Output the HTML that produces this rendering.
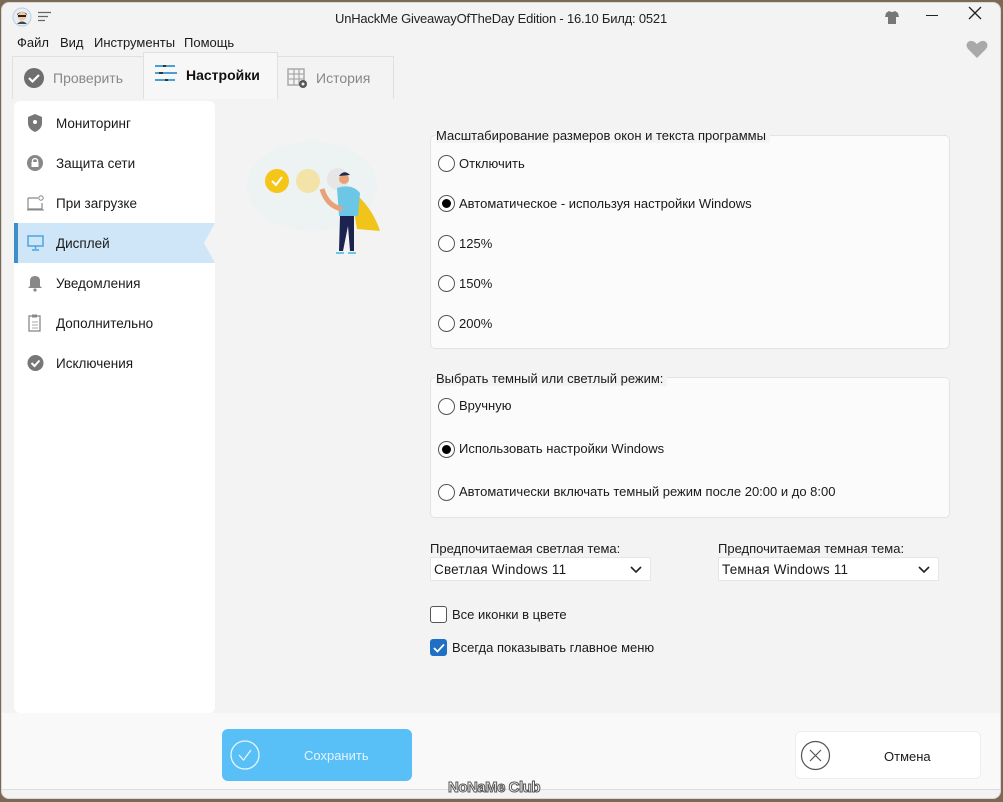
<!DOCTYPE html>
<html><head><meta charset="utf-8"><style>
*{box-sizing:border-box;margin:0;padding:0}
body{width:1003px;height:802px;background:#7a6a55;font-family:"Liberation Sans","Noto Sans CJK SC",sans-serif;font-size:13px;color:#1a1a1a;position:relative;overflow:hidden}
.win{position:absolute;left:1px;top:2px;width:1000px;height:797px;background:#f3f3f3;border-radius:8px;border:1px solid #d8d8d8}
.abs{position:absolute}
.title{left:0;right:0;top:8px;text-align:center;font-size:13px;letter-spacing:-0.2px;color:#222}
.menu span{position:absolute;top:32px;font-size:13px}
.tab{position:absolute;top:53px;height:43px;border:1px solid #e0e0e0;border-bottom:none;background:#f3f3f3;font-size:14px;color:#888}
.sidebar{left:12px;top:98px;width:201px;height:612px;background:#fff;border-radius:6px}
.item{position:absolute;left:0;width:201px;height:40px;font-size:13.5px}
.item .t{position:absolute;left:42px;top:13px}
.item svg{position:absolute;left:13px;top:11px}
.grp{position:absolute;background:#fbfbfb;border:1px solid #e3e3e3;border-radius:5px}
.leg{position:absolute;background:#f3f3f3;padding-right:4px;font-size:13px}
.r{position:absolute;width:17px;height:17px;border:1px solid #555;border-radius:50%;background:#fff}
.r.on::after{content:"";position:absolute;left:3px;top:3px;width:9px;height:9px;border-radius:50%;background:#000}
.rl{position:absolute;font-size:13px}
.dd{position:absolute;height:24px;background:#fff;border:1px solid #e6e6e6;font-size:13.5px;padding:4px 0 0 3px;letter-spacing:.2px}
.cb{position:absolute;width:17px;height:17px;border:1px solid #555;border-radius:3px;background:#fff}
</style></head><body>
<div class="win">
  <svg class="abs" style="left:10px;top:4px" width="20" height="20"><circle cx="10" cy="10" r="9" fill="#e8eef3" stroke="#b9cfe0"/><circle cx="10" cy="9" r="4.5" fill="#f2c9a8"/><path d="M5 8 Q10 2 15 8 L15 7 Q10 3 5 7Z" fill="#222"/><rect x="6" y="8" width="8" height="2" fill="#222"/><path d="M5 17 Q10 12 15 17" fill="#444"/></svg>
  <svg class="abs" style="left:36px;top:8px" width="14" height="12"><path d="M0 1.5H13M0 5.5H10M0 9.5H7" stroke="#666" stroke-width="1.3"/></svg>
  <div class="abs title">UnHackMe GiveawayOfTheDay Edition - 16.10 Билд: 0521</div>
  <svg class="abs" style="left:883px;top:8px" width="14" height="13"><path d="M4 0 L1 2 L0 6 L3 6 L3 13 L11 13 L11 6 L14 6 L13 2 L10 0 Q7 2 4 0Z" fill="#777"/></svg>
  <div class="abs" style="left:924px;top:12px;width:12px;height:1.3px;background:#222"></div>
  <svg class="abs" style="left:966px;top:3px" width="14" height="14"><path d="M1 1L13 13M13 1L1 13" stroke="#222" stroke-width="1.3"/></svg>
  <svg class="abs" style="left:964px;top:36px" width="22" height="20"><path d="M11 19 L2 10 Q-1 6 2 3 Q6 0 11 5 Q16 0 20 3 Q23 6 20 10Z" fill="#a9a9a9"/></svg>
  <div class="menu"><span style="left:15px">Файл</span><span style="left:58px">Вид</span><span style="left:92px">Инструменты</span><span style="left:182px">Помощь</span></div>

  <div class="tab" style="left:10px;width:132px"><svg class="abs" style="left:10px;top:10px" width="22" height="22"><circle cx="11" cy="11" r="10" fill="#6e6e6e"/><path d="M6 11L9.5 14.5L16 8" stroke="#fff" stroke-width="2.2" fill="none"/></svg><span class="abs" style="left:40px;top:13px">Проверить</span></div>
  <div class="tab" style="left:141px;top:49px;height:47px;width:135px;background:#f7f7f7;color:#111;font-weight:bold;border-bottom:none"><svg class="abs" style="left:11px;top:10px" width="22" height="20"><path d="M0 3H8M11 3H20M0 10H4M8 10H22M0 17H10M13 17H20" stroke="#4a9fd5" stroke-width="2"/><path d="M8 3H11M4 10H8M10 17H13" stroke="#333" stroke-width="2"/></svg><span class="abs" style="left:42px;top:14px">Настройки</span></div>
  <div class="tab" style="left:275px;width:117px"><svg class="abs" style="left:9px;top:11px" width="22" height="22"><rect x="1" y="1" width="16" height="16" fill="none" stroke="#aaa" stroke-width="1.5"/><path d="M1 6H17M1 11H17M7 1V17M12 1V17" stroke="#aaa" stroke-width="1.3"/><circle cx="16" cy="16" r="4" fill="#555"/><circle cx="16" cy="16" r="1.5" fill="#eee"/></svg><span class="abs" style="left:38px;top:13px">История</span></div>

  <div class="abs sidebar">
    <div class="item" style="top:2px"><svg width="16" height="18"><path d="M8 0L15 3V9Q15 15 8 18Q1 15 1 9V3Z" fill="#777"/><circle cx="8" cy="8" r="2" fill="#fff"/></svg><span class="t">Мониторинг</span></div>
    <div class="item" style="top:42px"><svg width="16" height="18"><circle cx="8" cy="9" r="8" fill="#888"/><rect x="4.5" y="8" width="7" height="5" fill="#fff"/><path d="M5.5 8V6Q8 3 10.5 6V8" stroke="#fff" fill="none" stroke-width="1.3"/></svg><span class="t">Защита сети</span></div>
    <div class="item" style="top:82px"><svg width="18" height="18"><path d="M1 4V15H15V9M1 4H11" stroke="#888" fill="none" stroke-width="1.2"/><circle cx="14" cy="4" r="2.2" fill="none" stroke="#888"/><path d="M0 16H17" stroke="#888"/></svg><span class="t">При загрузке</span></div>
    <div class="item" style="top:122px;background:#cfe6f8"><div class="abs" style="left:0;top:0;width:4px;height:40px;background:#3e8fc9"></div><div class="abs" style="right:0;top:0;width:0;height:0;border-top:20px solid transparent;border-bottom:20px solid transparent;border-right:11px solid #f3f3f3"></div><svg width="18" height="18"><rect x="1" y="2" width="15" height="10" fill="none" stroke="#4aa6e0" stroke-width="1.5"/><path d="M8.5 12V15M5 16H12" stroke="#4aa6e0" stroke-width="1.5"/></svg><span class="t">Дисплей</span></div>
    <div class="item" style="top:162px"><svg width="16" height="18"><path d="M3 12V7Q3 2 8 2Q13 2 13 7V12L15 14H1Z" fill="#888"/><circle cx="8" cy="16" r="1.6" fill="#888"/></svg><span class="t">Уведомления</span></div>
    <div class="item" style="top:202px"><svg width="16" height="18"><rect x="2" y="2" width="11" height="15" fill="none" stroke="#888" stroke-width="1.3"/><rect x="5" y="0.5" width="5" height="3" fill="#888"/><path d="M5 8H11M5 11H11M5 14H11" stroke="#aaa"/></svg><span class="t">Дополнительно</span></div>
    <div class="item" style="top:242px"><svg width="18" height="18"><circle cx="8.5" cy="9" r="8" fill="#777"/><path d="M4.5 9L7.5 12L12.5 6.5" stroke="#fff" stroke-width="2" fill="none"/></svg><span class="t">Исключения</span></div>
  </div>

  <svg class="abs" style="left:240px;top:128px" width="150" height="130">
    <ellipse cx="70" cy="55" rx="65" ry="45" fill="#edf2f3"/>
    <circle cx="35" cy="50" r="12" fill="#f5c518"/><path d="M30 50L34 54L40 46" stroke="#fff" stroke-width="2" fill="none"/>
    <circle cx="66" cy="50" r="12" fill="#f3e3a8"/>
    <circle cx="96" cy="48" r="11" fill="#e6e6e6"/>
    <path d="M108 58 Q130 75 138 100 L115 98Z" fill="#f1c419"/>
    <path d="M95 57 Q110 52 118 62 L116 85 L97 85Z" fill="#6cc7e6"/>
    <path d="M80 58 Q85 75 100 78" stroke="#e8a27a" stroke-width="5" fill="none"/>
    <circle cx="102" cy="48" r="5" fill="#e8a27a"/><path d="M97 45 Q102 38 108 44" fill="#1d2b4c"/>
    <path d="M98 85 L97 120 L101 120 L106 95 L108 120 L112 120 L112 85Z" fill="#1d2350"/>
    <path d="M94 122H102M106 122H114" stroke="#6cc7e6" stroke-width="2"/>
  </svg>

  <div class="grp" style="left:428px;top:132px;width:520px;height:214px"></div>
  <div class="leg" style="left:434px;top:125px">Масштабирование размеров окон и текста программы</div>
  <div class="r" style="left:436px;top:152px"></div><div class="rl" style="left:457px;top:153px">Отключить</div>
  <div class="r on" style="left:436px;top:192px"></div><div class="rl" style="left:457px;top:193px">Автоматическое - используя настройки Windows</div>
  <div class="r" style="left:436px;top:232px"></div><div class="rl" style="left:457px;top:233px">125%</div>
  <div class="r" style="left:436px;top:272px"></div><div class="rl" style="left:457px;top:273px">150%</div>
  <div class="r" style="left:436px;top:312px"></div><div class="rl" style="left:457px;top:313px">200%</div>

  <div class="grp" style="left:428px;top:374px;width:520px;height:141px"></div>
  <div class="leg" style="left:434px;top:368px">Выбрать темный или светлый режим:</div>
  <div class="r" style="left:436px;top:395px"></div><div class="rl" style="left:457px;top:395px">Вручную</div>
  <div class="r on" style="left:436px;top:438px"></div><div class="rl" style="left:457px;top:438px">Использовать настройки Windows</div>
  <div class="r" style="left:436px;top:481px"></div><div class="rl" style="left:457px;top:481px">Автоматически включать темный режим после 20:00 и до 8:00</div>

  <div class="abs" style="left:428px;top:538px">Предпочитаемая светлая тема:</div>
  <div class="dd" style="left:428px;top:554px;width:221px">Светлая Windows 11<svg class="abs" style="right:8px;top:8px" width="12" height="8"><path d="M1 1L6 6L11 1" stroke="#222" stroke-width="1.6" fill="none"/></svg></div>
  <div class="abs" style="left:716px;top:538px">Предпочитаемая темная тема:</div>
  <div class="dd" style="left:716px;top:554px;width:221px">Темная Windows 11<svg class="abs" style="right:8px;top:8px" width="12" height="8"><path d="M1 1L6 6L11 1" stroke="#222" stroke-width="1.6" fill="none"/></svg></div>

  <div class="cb" style="left:428px;top:603px"></div><div class="rl" style="left:450px;top:604px">Все иконки в цвете</div>
  <div class="cb" style="left:428px;top:636px;background:#1f6fc5;border-color:#1f6fc5"><svg class="abs" style="left:2px;top:3px" width="12" height="10"><path d="M1 5L4.5 8.5L11 1.5" stroke="#fff" stroke-width="1.8" fill="none"/></svg></div><div class="rl" style="left:450px;top:637px">Всегда показывать главное меню</div>

  <div class="abs" style="left:0;top:710px;width:998px;height:77px;background:#f9f9f9;border-bottom:1px solid #ddd"></div>
  <div class="abs" style="left:220px;top:726px;width:190px;height:52px;background:#59c0f7;border-radius:6px"><svg class="abs" style="left:7px;top:10px" width="32" height="32"><circle cx="16" cy="16" r="14" fill="none" stroke="#e8f6ff" stroke-width="1.3"/><path d="M10 16L14.5 21L22 11" stroke="#e8f6ff" stroke-width="1.3" fill="none"/></svg><span class="abs" style="left:82px;top:19px;color:#e3f4ff;font-size:13px">Сохранить</span></div>
  <div class="abs" style="left:793px;top:728px;width:186px;height:48px;background:#fff;border-radius:6px;border:1px solid #eee"><svg class="abs" style="left:4px;top:8px" width="31" height="31"><circle cx="15.5" cy="15.5" r="14" fill="none" stroke="#555" stroke-width="1.2"/><path d="M10 10L21 21M21 10L10 21" stroke="#555" stroke-width="1.2"/></svg><span class="abs" style="left:88px;top:17px;font-size:13px">Отмена</span></div>
  <div class="abs" style="left:446px;top:776px;font-size:15px;font-weight:bold;color:#fff;-webkit-text-stroke:1px #555;letter-spacing:-.5px">NoNaMe Club</div>
</div>
</body></html>
